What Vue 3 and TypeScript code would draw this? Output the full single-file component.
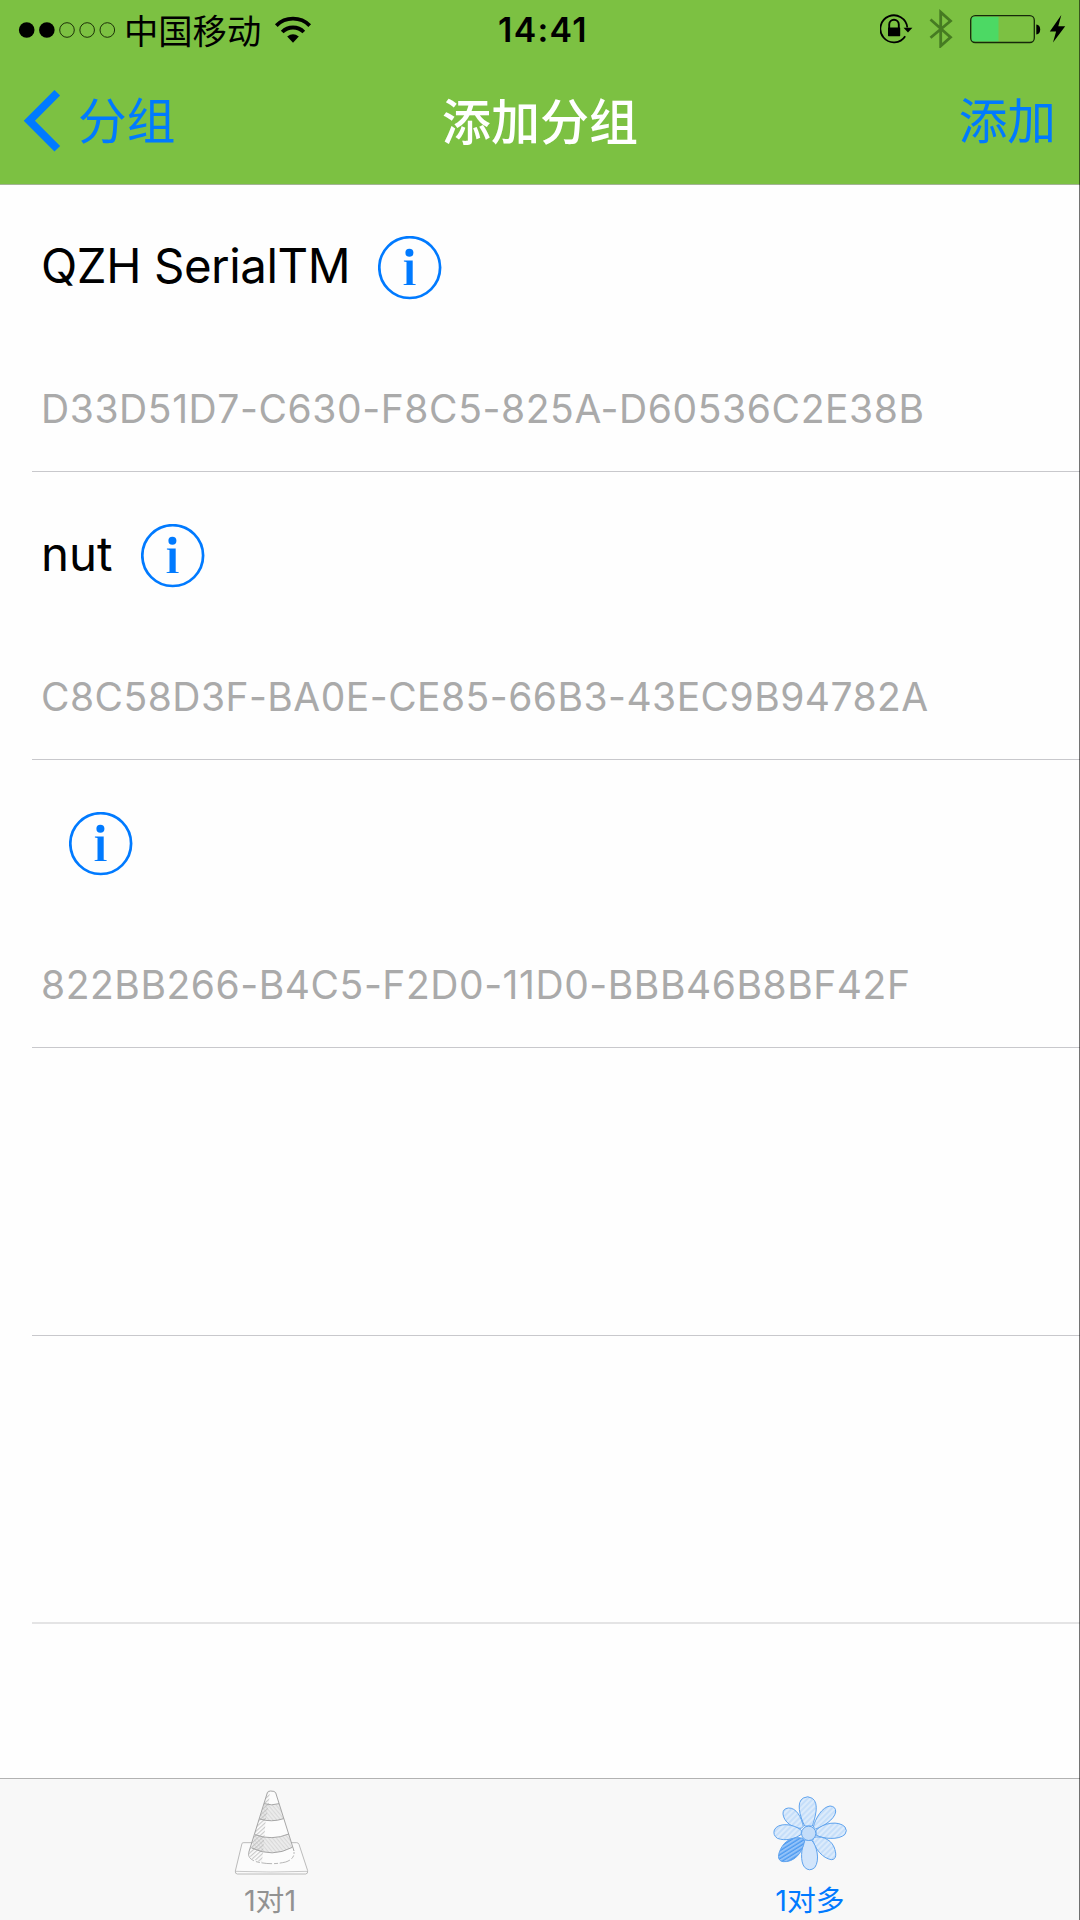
<script setup lang="ts">
interface Device {
  name: string
  uuid: string
  nameTracking: number
  uuidTracking: number
}

const devices: Device[] = [
  { name: 'QZH SerialTM', uuid: 'D33D51D7-C630-F8C5-825A-D60536C2E38B', nameTracking: -0.42, uuidTracking: 0.59 },
  { name: 'nut', uuid: 'C8C58D3F-BA0E-CE85-66B3-43EC9B94782A', nameTracking: 0, uuidTracking: 0.47 },
  { name: '', uuid: '822BB266-B4C5-F2D0-11D0-BBB46B8BF42F', nameTracking: 0, uuidTracking: 0.55 },
]

const signalDots = [true, true, false, false, false]
</script>

<template>
  <div class="screen">
    <header class="top">
      <div class="status">
        <div class="status-left">
          <svg class="signal" width="98" height="18" viewBox="0 0 98 18">
            <circle
              v-for="(on, i) in signalDots"
              :key="i"
              :cx="8.7 + i * 20.15"
              cy="9"
              :r="on ? 7.8 : 7.3"
              :fill="on ? '#000' : 'none'"
              :stroke="on ? 'none' : '#1d3008'"
              stroke-width="1"
            />
          </svg>
          <span class="carrier">中国移动</span>
          <svg class="wifi" width="38" height="28" viewBox="0 0 38 28">
            <g fill="none" stroke="#000" stroke-width="3.8">
              <path d="M2.3 9.6A23.6 23.6 0 0 1 35.7 9.6" />
              <path d="M8.2 16A15.2 15.2 0 0 1 29.8 16" />
            </g>
            <path d="M13.2 20.6Q19 15.8 24.8 20.6L19 26.8Z" />
          </svg>
        </div>
        <span class="time">14:41</span>
        <svg class="indicators" width="200" height="48" viewBox="0 0 200 48">
          <g fill="none" stroke="#000" stroke-width="1.8">
            <path d="M25.2 36.2A13.5 13.5 0 1 1 27.3 27.5" />
            <path d="M9.2 29V24.5a4.8 4.8 0 0 1 9.6 0V29" stroke-width="1.9" />
          </g>
          <rect x="8" y="27.5" width="12.2" height="8.7" rx=".6" />
          <path d="M23.5 27.8H32.4L28 32.4Z" />
          <path d="M50.5 19.5L70.5 37.2L60.7 46V12.2L70.5 21L50.5 37.8" fill="none" stroke="#467b22" stroke-width="2.8" />
          <rect x="91.5" y="16.7" width="27" height="24.8" fill="#4cd964" />
          <rect x="90.7" y="15.7" width="63.6" height="26.8" rx="4.5" fill="none" stroke="#16280a" stroke-width="1.3" />
          <path d="M156.3 24.4Q160.2 25 160.2 29.4T156.3 34.4Z" />
          <path d="M181.3 15L169.8 31.6H176.1L173 42.5L185.2 26.2H178.3Z" />
        </svg>
      </div>
      <nav class="nav">
        <a class="back">
          <svg width="40" height="64" viewBox="0 0 40 64">
            <path d="M34.3 3.8L6.4 31.8L34.3 59.8" fill="none" stroke="#007aff" stroke-width="8" />
          </svg>
          <span>分组</span>
        </a>
        <h1>添加分组</h1>
        <a class="add">添加</a>
      </nav>
    </header>

    <main class="list">
      <section v-for="d in devices" :key="d.uuid" class="row">
        <div class="title">
          <span class="name" :style="{ letterSpacing: d.nameTracking + 'px' }">{{ d.name }}</span>
          <svg class="info" width="64" height="64" viewBox="0 0 64 64">
            <circle cx="31.7" cy="31.6" r="30.4" fill="none" stroke="#007aff" stroke-width="2.7" />
            <circle cx="31.4" cy="16.8" r="4" fill="#007aff" />
            <path d="M25.9 24.4H34.7V47.8L37.7 48.3V49.1H25.6V48.3L28.5 47.8V25.9L25.9 25.4Z" fill="#007aff" />
          </svg>
        </div>
        <div class="uuid" :style="{ letterSpacing: d.uuidTracking + 'px' }">{{ d.uuid }}</div>
      </section>
      <section class="row"></section>
      <section class="row last"></section>
    </main>

    <footer class="tabs">
      <div class="tab">
        <svg width="80" height="96" viewBox="30 27 240 288">
          <defs>
            <pattern id="coneHatch" width="9" height="9" patternUnits="userSpaceOnUse" patternTransform="rotate(50)">
              <rect width="9" height="9" fill="#ececec" />
              <path d="M0 2H9" stroke="#d2d2d2" stroke-width="2.5" />
            </pattern>
            <pattern id="coneShade" width="9" height="9" patternUnits="userSpaceOnUse" patternTransform="rotate(-42)">
              <path d="M0 2H9" stroke="#bdbdbd" stroke-width="2.8" />
            </pattern>
          </defs>
          <path d="M66 220Q68 218 72 218H230Q235 218 237 223L263 302Q264 312 257 312H52Q45 312 46 303Z" fill="#fbfbfb" stroke="#b0b0b0" stroke-width="2.6" />
          <path d="M47 304Q150 308 262 304" fill="none" stroke="#b5b5b5" stroke-width="2.2" />
          <path d="M142 68Q143 63 152 63Q164 63 167 68L222 246Q224 267 197 276Q151 287 105 274Q86 266 86 248Z" fill="#fcfcfc" />
          <path d="M133 101Q155 108 177 101L191 146Q154 158 119 147Z" fill="url(#coneHatch)" />
          <path d="M105 194Q156 213 206 192L217 232Q157 264 95 234Z" fill="url(#coneHatch)" />
          <path d="M142 68L150 64L146 105L137 150L133 204L126 277Q88 270 86 248Z" fill="url(#coneShade)" />
          <g fill="none" stroke="#999" stroke-width="2.6">
            <path d="M86 248L142 68Q143 63 152 63Q164 63 167 68L222 243" />
            <path d="M133 101Q155 108 177 101M119 147Q154 158 191 146M105 194Q156 213 206 192M95 234Q157 264 217 232" />
            <path d="M86 248Q82 264 105 274Q151 287 197 276Q224 267 222 246" stroke="#aaa" stroke-dasharray="32 6 12 5" />
          </g>
        </svg>
        <span>1对1</span>
      </div>
      <div class="tab active">
        <svg width="80" height="96" viewBox="60 27 240 288">
          <defs>
            <pattern id="petal" width="12" height="12" patternUnits="userSpaceOnUse" patternTransform="rotate(-45)">
              <rect width="12" height="12" fill="#dcebfb" />
              <path d="M0 3H12" stroke="#a9cdf7" stroke-width="2.6" />
            </pattern>
            <pattern id="petalDark" width="10" height="10" patternUnits="userSpaceOnUse" patternTransform="rotate(-32)">
              <rect width="10" height="10" fill="#93c2f8" />
              <path d="M0 3H10" stroke="#4b9af2" stroke-width="4" />
            </pattern>
          </defs>
          <g fill="url(#petal)" stroke="#5fa3ee" stroke-width="3" stroke-linejoin="round">
            <path d="M164 168C149 138 138 96 160 84Q173 76 187 85C209 101 195 143 187 168Z" />
            <path d="M154 175C128 176 101 155 99 132Q98 116 115 114C139 112 155 144 160 169Z" />
            <path d="M190 171C196 146 216 111 240 108Q258 109 257 126C253 149 220 169 197 177Z" />
            <path d="M154 181C130 160 83 157 73 180Q68 195 82 205C107 214 135 207 154 193Z" />
            <path d="M198 181C220 158 266 151 285 171Q293 182 285 193C266 211 220 207 198 195Z" />
            <path d="M192 202C208 198 240 203 252 231C260 251 260 269 244 269C218 265 196 237 188 211Z" />
            <path d="M165 209C153 234 150 276 164 292Q178 306 194 293C211 270 200 226 185 211Z" fill="#d2e5fb" />
            <path d="M159 205C142 200 111 204 96 230C83 251 80 272 99 275C130 277 156 254 164 212Z" fill="url(#petalDark)" />
            <circle cx="176" cy="190" r="21.5" fill="#c4ddf9" />
          </g>
        </svg>
        <span>1对多</span>
      </div>
    </footer>
  </div>
</template>

<style>
body {
  margin: 0;
  background: #fff;
}
</style>

<style scoped>
.screen {
  position: relative;
  width: 1080px;
  height: 1920px;
  display: flex;
  flex-direction: column;
  overflow: hidden;
  background: #fefefe;
  font-family: Inter, 'Noto Sans CJK SC', sans-serif;
}
.screen::after {
  content: '';
  position: absolute;
  top: 0;
  right: 0;
  width: 1px;
  height: 100%;
  background: rgba(0, 0, 0, 0.55);
}
.top {
  box-sizing: border-box;
  height: 185px;
  background: #7cc142;
  border-bottom: 1px solid #a3b494;
}
.status {
  height: 58px;
  display: grid;
  grid-template-columns: 1fr auto 1fr;
  align-items: center;
}
.status-left {
  display: flex;
  align-items: center;
  padding-left: 18px;
}
.carrier {
  margin: 0 13px 0 8px;
  padding-bottom: 2px;
  font-family: 'Noto Sans CJK SC', sans-serif;
  font-size: 34.3px;
  line-height: 56px;
}
.time {
  padding: 0 0 0 6px;
  font-size: 33.8px;
  font-weight: 600;
  line-height: 60px;
  letter-spacing: 1.3px;
}
.indicators {
  align-self: start;
  justify-self: end;
}
.nav {
  height: 126px;
  display: grid;
  grid-template-columns: 1fr auto 1fr;
  align-items: center;
  font-family: 'Noto Sans CJK SC', sans-serif;
  font-size: 48.7px;
  line-height: 121px;
  color: #007aff;
}
.back {
  display: flex;
  align-items: center;
  padding-left: 23px;
}
.back span {
  margin-left: 15px;
  padding-bottom: 5px;
}
.nav h1 {
  margin: 0;
  padding-bottom: 5px;
  font-size: 49px;
  font-weight: 500;
  color: #fff;
}
.add {
  justify-self: end;
  padding: 0 24px 5px 0;
}
.list {
  flex: 1;
  margin-top: -1px;
  padding-left: 32px;
}
.row {
  box-sizing: border-box;
  height: 288px;
  padding: 52px 0 0 9px;
  border-bottom: 1px solid #c8c8cc;
}
.row.last {
  border-bottom: 2px solid #e4e4e5;
}
.title {
  height: 64px;
  display: flex;
  align-items: center;
  gap: 28px;
}
.name {
  padding-bottom: 4px;
  font-size: 47.4px;
  line-height: 60px;
  color: #000;
}
.uuid {
  margin-top: 85px;
  font-size: 39px;
  line-height: 48px;
  color: #aaa;
  white-space: nowrap;
}
.tabs {
  box-sizing: border-box;
  height: 142px;
  display: flex;
  border-top: 1px solid #b2b2b2;
  background: #f8f8f8;
}
.tab {
  flex: 1;
  display: flex;
  flex-direction: column;
  align-items: center;
  font-size: 28.8px;
  line-height: 50px;
  color: #929292;
}
.tab svg {
  flex: none;
}
.tab span {
  padding-top: 1px;
}
.tab.active {
  color: #007aff;
}
</style>
